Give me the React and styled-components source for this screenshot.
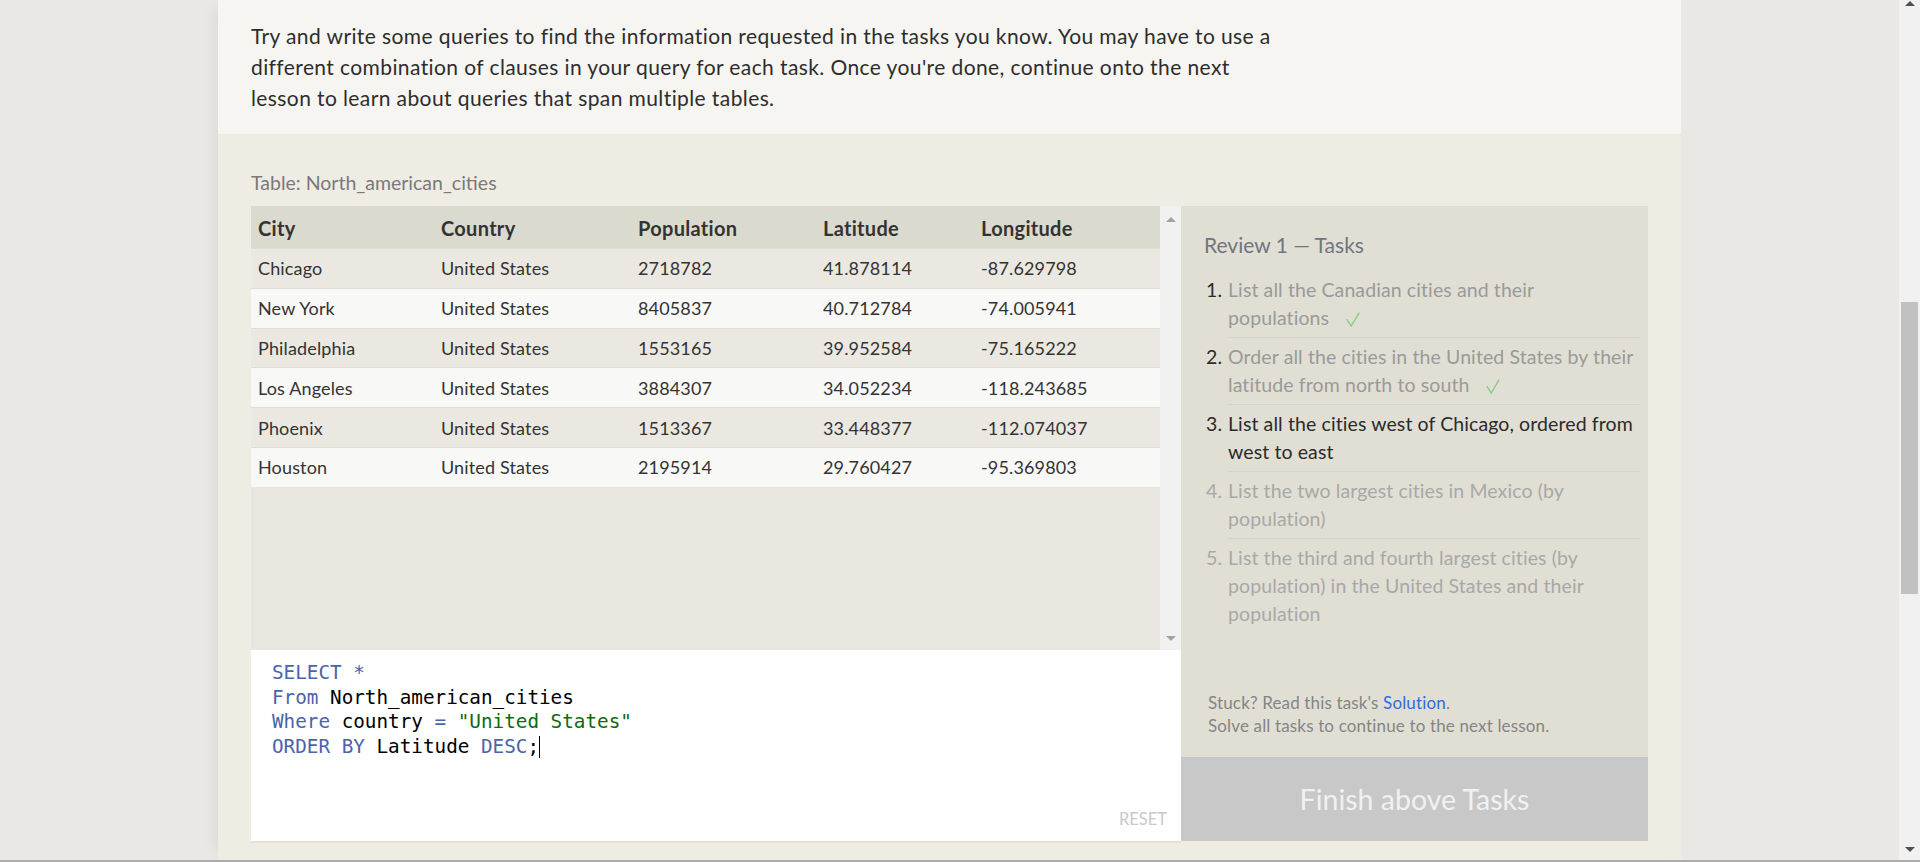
import React from 'react';
import styled, { createGlobalStyle } from 'styled-components';

const GlobalStyle = createGlobalStyle`
  html, body {
    margin: 0;
    padding: 0;
    overflow: hidden;
  }
  body {
    background: #ebe7e4;
    font-family: Lato, "Open Sans", sans-serif;
  }
`;

const cities = [
  ['Chicago', 'United States', '2718782', '41.878114', '-87.629798'],
  ['New York', 'United States', '8405837', '40.712784', '-74.005941'],
  ['Philadelphia', 'United States', '1553165', '39.952584', '-75.165222'],
  ['Los Angeles', 'United States', '3884307', '34.052234', '-118.243685'],
  ['Phoenix', 'United States', '1513367', '33.448377', '-112.074037'],
  ['Houston', 'United States', '2195914', '29.760427', '-95.369803'],
];

const tasks = [
  { text: 'List all the Canadian cities and their populations', state: 'done' },
  { text: 'Order all the cities in the United States by their latitude from north to south', state: 'done' },
  { text: 'List all the cities west of Chicago, ordered from west to east', state: 'current' },
  { text: 'List the two largest cities in Mexico (by population)', state: 'todo' },
  { text: 'List the third and fourth largest cities (by population) in the United States and their population', state: 'todo' },
];

const CheckIcon = () => (
  <CheckSvg width="14" height="15" viewBox="0 0 14 15">
    <path d="M0.8 7.2 L5.2 14 L13.2 0.6" fill="none" stroke="#86cc86" strokeWidth="1.4" />
  </CheckSvg>
);

const App = () => {
  return (
    <>
      <GlobalStyle />
      <Screen>
        <PageArea>
          <Column>
            <Intro>
              <IntroText>
                Try and write some queries to find the information requested in the tasks you know. You may have to use a
                different combination of clauses in your query for each task. Once you're done, continue onto the next
                lesson to learn about queries that span multiple tables.
              </IntroText>
            </Intro>
            <Exercise>
              <TableLabel>Table: North_american_cities</TableLabel>
              <Workspace>
                <LeftCol>
                  <TableFrame>
                    <TableScroll>
                      <Row $head>
                        <Cell>City</Cell>
                        <Cell>Country</Cell>
                        <Cell>Population</Cell>
                        <Cell>Latitude</Cell>
                        <Cell>Longitude</Cell>
                      </Row>
                      {cities.map((c, i) => (
                        <Row key={c[0]} $odd={i % 2 === 0}>
                          {c.map((v, j) => <Cell key={j}>{v}</Cell>)}
                        </Row>
                      ))}
                    </TableScroll>
                    <ScrollTrack>
                      <Arrow $up />
                      <Arrow />
                    </ScrollTrack>
                  </TableFrame>
                  <Editor>
                    <Code>
                      <Line><Kw>SELECT *</Kw></Line>
                      <Line><Kw>From</Kw> North_american_cities</Line>
                      <Line><Kw>Where</Kw> country <Kw>=</Kw> <Str>"United States"</Str></Line>
                      <Line><Kw>ORDER BY</Kw> Latitude <Kw>DESC</Kw>;<Caret /></Line>
                    </Code>
                    <Reset>RESET</Reset>
                  </Editor>
                </LeftCol>
                <RightCol>
                  <TasksBox>
                    <TasksTitle>Review 1 — Tasks</TasksTitle>
                    <TaskList>
                      {tasks.map((t, i) => (
                        <TaskItem key={i} $state={t.state}>
                          <TaskNum $state={t.state}>{i + 1}.</TaskNum>
                          <TaskText $last={i === tasks.length - 1}>
                            {t.text}
                            {t.state === 'done' && <CheckIcon />}
                          </TaskText>
                        </TaskItem>
                      ))}
                    </TaskList>
                    <Help>
                      Stuck? Read this task's <HelpLink>Solution</HelpLink>.
                      <br />
                      Solve all tasks to continue to the next lesson.
                    </Help>
                  </TasksBox>
                  <FinishButton>Finish above Tasks</FinishButton>
                </RightCol>
              </Workspace>
            </Exercise>
          </Column>
        </PageArea>
        <PageScrollbar>
          <Arrow $up $dark />
          <Thumb />
          <Arrow $dark $bottom />
        </PageScrollbar>
      </Screen>
    </>
  );
};

export default App;

const Screen = styled.div`
  display: flex;
  height: 860px;
  border-bottom: 2px solid #acacac;
`;

const PageArea = styled.div`
  flex: 1;
  display: flex;
  justify-content: center;
`;

const Column = styled.div`
  width: 1463px;
  display: flex;
  flex-direction: column;
  box-shadow: -10px 0 14px -8px rgba(0, 0, 0, 0.07);
`;

const Intro = styled.div`
  height: 134px;
  box-sizing: border-box;
  background: #f6f5f1;
  padding: 0 33px 21px;
  display: flex;
  align-items: flex-end;
`;

const IntroText = styled.p`
  margin: 0;
  max-width: 1030px;
  font-size: 21px;
  letter-spacing: 0.4px;
  line-height: 31px;
  color: #2d2d2d;
`;

const Exercise = styled.div`
  flex: 1;
  background: #efece4;
  border-radius: 4px 4px 0 0;
  padding: 37px 33px 0;
`;

const TableLabel = styled.div`
  font-size: 19.5px;
  line-height: 24px;
  color: #7a7a7a;
  margin-bottom: 11px;
`;

const Workspace = styled.div`
  display: flex;
`;

const LeftCol = styled.div`
  width: 930px;
  display: flex;
  flex-direction: column;
`;

const TableFrame = styled.div`
  height: 444px;
  display: flex;
`;

const TableScroll = styled.div`
  flex: 1;
  background: #e8e6df;
`;

const Row = styled.div`
  display: grid;
  grid-template-columns: 183px 197px 185px 158px 1fr;
  height: ${p => (p.$head ? '42px' : '39.8px')};
  align-items: center;
  background: ${p => (p.$head ? '#dbdacf' : p.$odd ? '#eae8e1' : '#f8f8f7')};
  border-top: ${p => (p.$head ? 'none' : '1px solid #dfddd5')};
  box-sizing: border-box;
  padding-top: ${p => (p.$head ? '2px' : '0')};
  font-size: ${p => (p.$head ? '20px' : '18px')};
  letter-spacing: ${p => (p.$head ? '0.3px' : '0.15px')};
  font-weight: ${p => (p.$head ? 700 : 400)};
  color: #333;
`;

const Cell = styled.div`
  padding-left: 7px;
  white-space: nowrap;
`;

const ScrollTrack = styled.div`
  width: 21px;
  background: #f1f1f1;
  display: flex;
  flex-direction: column;
  justify-content: space-between;
  align-items: center;
  padding: 11px 0 9px;
  box-sizing: border-box;
`;

const Arrow = styled.div`
  width: 0;
  height: 0;
  border-left: 5px solid transparent;
  border-right: 5px solid transparent;
  ${p => (p.$up ? 'border-bottom' : 'border-top')}: 5px solid ${p => (p.$dark ? '#505050' : '#a3a3a3')};
  margin-top: ${p => (p.$bottom ? 'auto' : '0')};
`;

const Editor = styled.div`
  height: 193px;
  box-sizing: border-box;
  background: #fff;
  border-bottom: 2px solid #e4e1d8;
  padding: 11px 14px 12px 21px;
  display: flex;
  flex-direction: column;
`;

const Code = styled.div`
  font-family: "DejaVu Sans Mono", "Liberation Mono", monospace;
  font-size: 19.3px;
  line-height: 24.5px;
  color: #000;
`;

const Line = styled.div`
  white-space: pre;
`;

const Kw = styled.span`
  color: #4a63ab;
`;

const Str = styled.span`
  color: #0f6a10;
`;

const Caret = styled.span`
  display: inline-block;
  width: 1px;
  height: 22px;
  background: #000;
  vertical-align: -5px;
`;

const Reset = styled.div`
  margin-top: auto;
  align-self: flex-end;
  font-size: 16.5px;
  color: #c9c9c9;
`;

const RightCol = styled.div`
  width: 467px;
  display: flex;
  flex-direction: column;
  padding-bottom: 2px;
`;

const TasksBox = styled.div`
  flex: 1;
  background: #e1dfd3;
  padding: 25px 8px 20px 23px;
  display: flex;
  flex-direction: column;
`;

const TasksTitle = styled.div`
  font-size: 21px;
  line-height: 28px;
  color: #6f7582;
`;

const TaskList = styled.div`
  margin-top: 12px;
`;

const TaskItem = styled.div`
  display: flex;
  font-size: 19.5px;
  letter-spacing: 0.1px;
  line-height: 28px;
  color: ${p => (p.$state === 'current' ? '#2b2b2b' : p.$state === 'done' ? '#9a9a9a' : '#a8a8a8')};
`;

const TaskNum = styled.div`
  width: 22px;
  padding: 5px 0 0 2px;
  color: ${p => (p.$state === 'todo' ? '#a8a8a8' : '#2b2b2b')};
`;

const TaskText = styled.div`
  flex: 1;
  padding: 5px 0;
  border-bottom: ${p => (p.$last ? 'none' : '1px solid #d6d4c9')};
`;

const CheckSvg = styled.svg`
  margin-left: 17px;
  vertical-align: -2px;
`;

const Help = styled.div`
  margin-top: auto;
  font-size: 17px;
  letter-spacing: 0.15px;
  line-height: 23px;
  color: #858585;
  padding-left: 4px;
`;

const HelpLink = styled.a`
  color: #2a6de0;
  text-decoration: none;
`;

const FinishButton = styled.div`
  height: 84px;
  background: #c8c8c8;
  color: #f1f1f1;
  font-size: 28.5px;
  display: flex;
  align-items: center;
  justify-content: center;
`;

const PageScrollbar = styled.div`
  width: 21px;
  background: #f1f1f1;
  display: flex;
  flex-direction: column;
  align-items: center;
  padding: 1px 0 8px;
  box-sizing: border-box;
`;

const Thumb = styled.div`
  width: 17px;
  height: 292px;
  margin-top: 296px;
  background: #c1c1c1;
`;
